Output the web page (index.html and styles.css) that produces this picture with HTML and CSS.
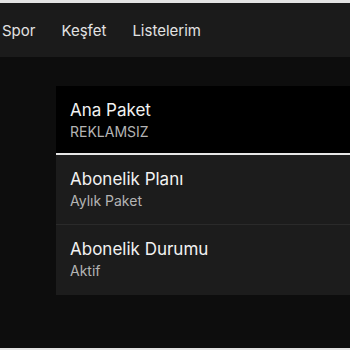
FILE: index.html
```html
<!DOCTYPE html>
<html lang="tr">
<head>
<meta charset="utf-8">
<link rel="stylesheet" href="styles.css">
</head>
<body>
<div class="page">
  <div class="top-strip"></div>
  <header class="header">
    <nav class="nav">
      <span class="nav-item">Spor</span>
      <span class="nav-item">Keşfet</span>
      <span class="nav-item">Listelerim</span>
    </nav>
  </header>
  <main class="main">
    <div class="list">
      <div class="row row-active">
        <div class="row-title">Ana Paket</div>
        <div class="row-sub">REKLAMSIZ</div>
      </div>
      <div class="row">
        <div class="row-title">Abonelik Planı</div>
        <div class="row-sub">Aylık Paket</div>
      </div>
      <div class="row">
        <div class="row-title">Abonelik Durumu</div>
        <div class="row-sub">Aktif</div>
      </div>
    </div>
  </main>
  <div class="bottom-strip"></div>
</div>
</body>
</html>
```
FILE: styles.css
```css
html, body {
  margin: 0;
  padding: 0;
  background: #0d0d0d;
}
body {
  font-family: Inter, "Noto Sans", sans-serif;
  -webkit-font-smoothing: antialiased;
}
.page {
  height: 350px;
  display: flex;
  flex-direction: column;
  overflow: hidden;
}
.top-strip {
  height: 3px;
  background: #e4e4e4;
}
.header {
  height: 54px;
  background: #1b1b1b;
  display: flex;
  align-items: center;
}
.nav {
  display: flex;
  gap: 26px;
  padding-left: 2px;
  padding-top: 1px;
}
.nav-item {
  color: #e2e2e2;
  font-size: 15px;
  line-height: 20px;
}
.main {
  flex: 1;
  padding: 29px 0 0 56px;
  background: #0d0d0d;
}
.list {
  display: flex;
  flex-direction: column;
}
.row {
  height: 70px;
  box-sizing: border-box;
  padding: 13px 0 0 14px;
  background: #1c1c1c;
  border-bottom: 1px solid #2a2a2a;
}
.row:last-child {
  border-bottom: none;
  height: 70px;
}
.row-active {
  background: #000;
  height: 69px;
  border-bottom: 2px solid #e6e6e6;
}
.row-title {
  color: #f2f2f2;
  font-size: 17px;
  line-height: 22px;
}
.row-sub {
  color: #b4b4b4;
  font-size: 14px;
  line-height: 18px;
  margin-top: 2px;
}
.bottom-strip {
  height: 2px;
  background: #e4e4e4;
}
```
